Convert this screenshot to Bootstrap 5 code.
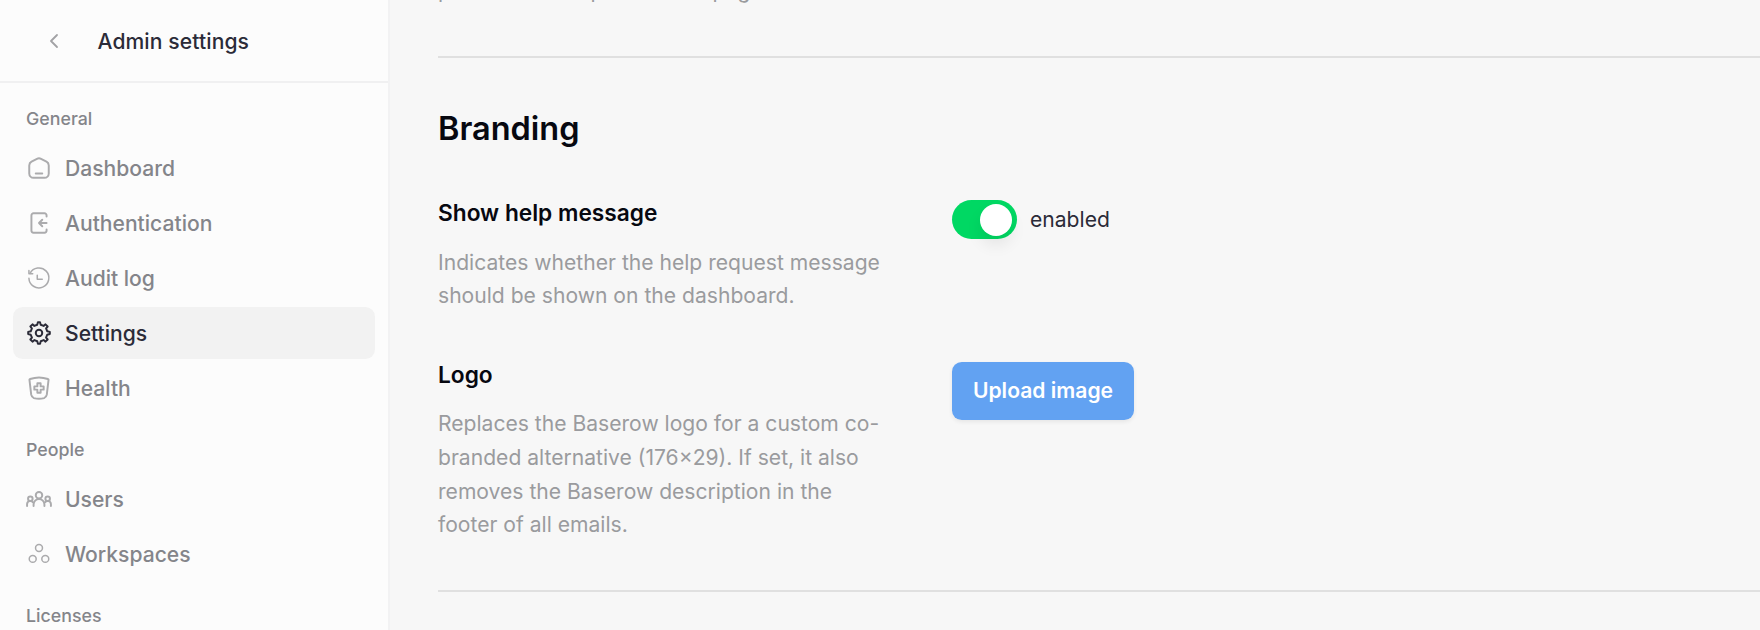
<!DOCTYPE html>
<html lang="en">
<head>
<meta charset="utf-8">
<meta name="viewport" content="width=device-width, initial-scale=1">
<title>Admin settings</title>
<link href="https://cdn.jsdelivr.net/npm/bootstrap@5.3.0/dist/css/bootstrap.min.css" rel="stylesheet">
<style>
body{font-family:Inter,"Liberation Sans",sans-serif;font-size:21.1px;line-height:34px;background:#f7f7f7;color:#2b2b38;height:630px;overflow:hidden}
.side{width:389.5px;height:630px;background:#fcfcfc;border-right:2px solid #f2f2f3}
.side-head{height:83px;border-bottom:2px solid #f0f0f1;padding-left:42px}
.side-head svg{width:24px;height:24px;color:#a2a2a5}
.side-title{margin-left:31.5px;padding-top:2px;color:#2b2b38;font-weight:500;letter-spacing:.1px}
.side svg{fill:none;stroke:currentColor;stroke-width:1.8;stroke-linecap:round;stroke-linejoin:round;flex:none}
.side svg.thin{stroke-width:1.4}
.group-label{font-size:17.8px;line-height:26px;font-weight:500;color:#84858a;padding-left:26px}
.label-general{padding-top:23px;margin-bottom:10px}
.label-people{padding-top:23px;margin-bottom:10px}
.side-nav{padding:0 13px;gap:3px}
.side-nav .nav-link{height:52px;padding:0 13px;gap:13px;border-radius:9.75px;color:#84858a;font-weight:500}
.side-nav .nav-link span{padding-top:1px}
.side-nav svg{width:26px;height:26px;color:#ababad}
.side-nav .nav-link.active{background:#f2f2f2;color:#2b2b38}
.side-nav .active svg{color:#2b2b38}
.page{padding-left:48.5px}
.cut-line{height:56px;color:#9a9b9e;word-spacing:.8px}
.cut-line p{margin-top:-26px}
.rule{height:2px;background:#e0e0e0}
.desc{color:#9a9b9e;line-height:33.7px}
h2{font-size:32.5px;line-height:40px;font-weight:600;color:#070810;margin-top:51px}
h3{font-size:22.7px;line-height:26px;font-weight:600;color:#070810;margin-bottom:19.6px}
.about{width:455px}
.control{margin-left:59px}
.setting-help{margin-top:51px;height:161.6px}
.setting-logo{height:228.4px}
.switch-label{margin-left:13px;line-height:39px}
.form-switch .form-check-input{width:65px;height:39px;margin:0;border:0;background:#00d863;position:relative;box-shadow:none}
.form-switch .form-check-input::after{content:"";position:absolute;right:5px;top:3.5px;width:32.5px;height:32.5px;border-radius:50%;background:#fff;box-shadow:0 9px 16px rgba(7,8,16,.08)}
.upload,.upload:hover{width:182px;height:58px;border:0;border-radius:9.75px;background:#62a2f2;color:#fff;font-size:21.1px;font-weight:600;box-shadow:0 2px 4px rgba(7,8,16,.07)}
</style>
</head>
<body>
<div class="d-flex">
<aside class="side flex-shrink-0">
  <header class="side-head d-flex align-items-center">
    <svg viewBox="0 0 24 24"><path d="M15 6l-6 6 6 6"/></svg>
    <span class="side-title">Admin settings</span>
  </header>
  <div class="group-label label-general">General</div>
  <nav class="nav flex-column side-nav">
    <a class="nav-link d-flex align-items-center" href="#"><svg viewBox="0 0 24 24"><path d="M9 17h6"/><path d="M21 9.6V17a4 4 0 0 1-4 4H7a4 4 0 0 1-4-4V9.6a3.900 3.900 0 0 1 2.100-3.400l5-2.700a4 4 0 0 1 3.800 0l5 2.700A3.900 3.900 0 0 1 21 9.600Z"/></svg><span>Dashboard</span></a>
    <a class="nav-link d-flex align-items-center" href="#"><svg viewBox="0 0 24 24"><path d="M19 12h-7m0 0 3-3m-3 3 3 3"/><path d="M19 6V5a2 2 0 0 0-2-2H7a2 2 0 0 0-2 2v14a2 2 0 0 0 2 2h10a2 2 0 0 0 2-2v-1"/></svg><span>Authentication</span></a>
    <a class="nav-link d-flex align-items-center" href="#"><svg class="thin" viewBox="0 0 24 24"><path d="M10.400 9.500v3.700H15"/><path d="M3.700 7.700A9.200 9.200 0 1 1 2.700 12.200"/><path d="M2.700 5v3.100h3.500"/></svg><span>Audit log</span></a>
    <a class="nav-link active d-flex align-items-center" href="#"><svg viewBox="0 0 24 24"><path d="M12 15a3 3 0 1 0 0-6 3 3 0 0 0 0 6Z"/><path d="M19.6224 10.3954L18.5247 7.7448L20 6L18 4L16.2647 5.48295L13.5578 4.36974L12.9353 2H10.981L10.3491 4.40113L7.70441 5.51596L6 4L4 6L5.45337 7.78885L4.3725 10.4463L2 11V13L4.40111 13.6555L5.51575 16.2997L4 18L6 20L7.79116 18.5403L10.397 19.6123L11 22H13L13.6045 19.6132L16.2551 18.5155C16.6969 18.8313 18 20 18 20L20 18L18.5159 16.2494L19.6139 13.598L21.9999 12.9772L22 11L19.6224 10.3954Z"/></svg><span>Settings</span></a>
    <a class="nav-link d-flex align-items-center" href="#"><svg viewBox="0 0 24 24"><path d="M3.200 4.500a.7.7 0 0 1 .6-.8Q12 .8 20.200 3.700a.7.7 0 0 1 .6.8L19.200 18.200a4 4 0 0 1-2.500 3.100q-4.700 1.300-9.400 0a4 4 0 0 1-2.500-3.100Z"/><path d="M10.500 7.700h3v2.800h2.800v3h-2.800v2.800h-3v-2.800H7.700v-3h2.800Z"/></svg><span>Health</span></a>
  </nav>
  <div class="group-label label-people">People</div>
  <nav class="nav flex-column side-nav">
    <a class="nav-link d-flex align-items-center" href="#"><svg viewBox="0 0 24 24"><path d="M1 18.500V17a3 3 0 0 1 5.500-1.800M23 18.500V17a3 3 0 0 0-5.500-1.800M7 18.500V17a5 5 0 0 1 10 0v1.500"/><circle cx="4" cy="11.800" r="2.100"/><circle cx="20" cy="11.800" r="2.100"/><circle cx="12" cy="8.500" r="3"/></svg><span>Users</span></a>
    <a class="nav-link d-flex align-items-center" href="#"><svg class="thin" viewBox="0 0 24 24"><circle cx="12" cy="6.500" r="3.200"/><circle cx="6.200" cy="16.500" r="3.200"/><circle cx="17.800" cy="16.500" r="3.200"/></svg><span>Workspaces</span></a>
  </nav>
  <div class="group-label label-people">Licenses</div>
</aside>
<main class="page flex-grow-1">
  <div class="cut-line d-flex align-items-start"><p class="mb-0">present on the public main page</p></div>
  <div class="rule"></div>
  <h2 class="mb-0">Branding</h2>
  <section class="d-flex setting-help">
    <div class="about"><h3>Show help message</h3><p class="desc mb-0">Indicates whether the help request message<br>should be shown on the dashboard.</p></div>
    <div class="control form-switch ps-0 d-flex"><input class="form-check-input" type="checkbox" role="switch" id="help" checked><label class="switch-label" for="help">enabled</label></div>
  </section>
  <section class="d-flex setting-logo">
    <div class="about"><h3>Logo</h3><p class="desc mb-0">Replaces the Baserow logo for a custom co-<br>branded alternative (176×29). If set, it also<br>removes the Baserow description in the<br>footer of all emails.</p></div>
    <div class="control"><button class="btn upload p-0 d-block" type="button">Upload image</button></div>
  </section>
  <div class="rule"></div>
</main>
</div>
<script src="https://cdn.jsdelivr.net/npm/bootstrap@5.3.0/dist/js/bootstrap.bundle.min.js"></script>
</body>
</html>
